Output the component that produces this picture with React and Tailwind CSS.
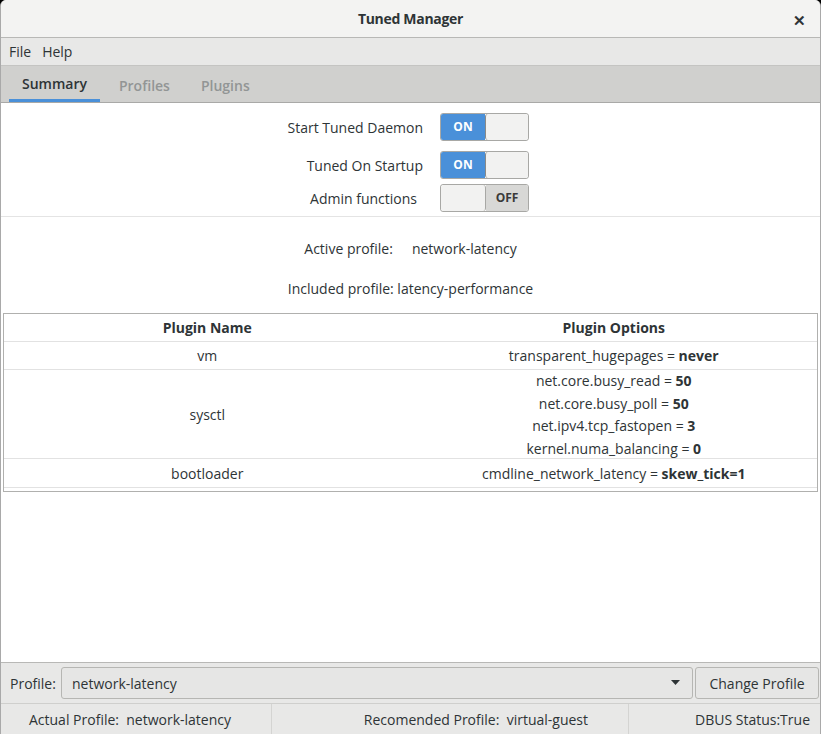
import React from 'react';

const font = { fontFamily: '"Open Sans", "Noto Sans", sans-serif' };

function Toggle({ on }) {
  return (
    <div className="flex h-[28px] w-[89px] overflow-hidden rounded-[3px] border border-[#a8a8a5] text-[12px] font-bold">
      {on ? (
        <>
          <div className="flex w-[44px] items-center justify-center bg-[#4a90d9] text-white">ON</div>
          <div className="flex-1 rounded-[3px] border-l border-[#8a8a87] bg-[#f2f2f1]" />
        </>
      ) : (
        <>
          <div className="w-[45px] rounded-[3px] border-r border-[#a8a8a5] bg-[#f2f2f1]" />
          <div className="flex flex-1 items-center justify-center bg-[#d8d8d6] text-[#3a3a3a]">OFF</div>
        </>
      )}
    </div>
  );
}

function SwitchRow({ label, on, className, pad }) {
  return (
    <div className={'flex items-center ' + (className || '')}>
      <div className={'w-[422px] text-right ' + (pad || '')}>{label}</div>
      <div className="ml-[17px]">
        <Toggle on={on} />
      </div>
    </div>
  );
}

function Opt({ k, v }) {
  return (
    <div>
      {k} = <b>{v}</b>
    </div>
  );
}

export default function App() {
  return (
    <div className="h-[734px] w-[821px] bg-black text-[14px] text-[#2e3436]" style={font}>
      <div className="flex h-full flex-col overflow-hidden rounded-t-[6px] border-x border-[#a9a9a9] bg-[#e8e8e7]">
        {/* title bar */}
        <div className="relative flex h-[38px] shrink-0 items-center justify-center border-b border-[#b8b8b6] bg-[#f3f3f2] font-bold tracking-[-0.3px] text-[#2e3436]">
          Tuned Manager
          <span className="absolute right-[14px] top-[9px] text-[15px]">✕</span>
        </div>
        {/* menu */}
        <div className="flex h-[28px] shrink-0 items-center gap-[11px] border-b border-[#c4c4c2] px-[8px]">
          <span>File</span>
          <span>Help</span>
        </div>
        {/* tabs */}
        <div className="flex h-[37px] shrink-0 items-stretch border-b border-[#a9a9a7] bg-[#d0d0ce] pl-[8px] font-semibold">
          <div className="flex items-center border-b-[3px] border-[#4a90d9] px-[13px] pt-[2px] text-[#2e3436]">Summary</div>
          <div className="flex items-center px-[19px] pt-[2px] text-[#929595]">Profiles</div>
          <div className="flex items-center px-[12px] pt-[2px] text-[#929595]">Plugins</div>
        </div>
        {/* content */}
        <div className="flex flex-1 flex-col border-b border-[#b8b8b6] bg-white">
          <div className="pt-[10px]">
            <SwitchRow label="Start Tuned Daemon" on />
            <SwitchRow label="Tuned On Startup" on className="mt-[10px]" />
            <SwitchRow label="Admin functions" className="mt-[5px]" pad="pr-[6px]" />
          </div>
          <div className="mt-[4px] border-b border-[#e4e4e4]" />
          <div className="mt-[21px] flex justify-center">
            <span className="mr-[19px]">Active profile:</span>
            <span>network-latency</span>
          </div>
          <div className="mt-[19px] text-center">Included profile: latency-performance</div>
          <div className="mx-[2px] mt-[14px] h-[179px] border border-[#b0b0ae]">
            <div className="grid grid-cols-2 border-b border-[#e2e2e2] py-[3px] text-center font-bold">
              <div>Plugin Name</div>
              <div>Plugin Options</div>
            </div>
            <div className="grid h-[28px] grid-cols-2 items-center border-b border-[#e2e2e2] text-center">
              <div>vm</div>
              <Opt k="transparent_hugepages" v="never" />
            </div>
            <div className="grid h-[89px] grid-cols-2 items-center border-b border-[#e2e2e2] text-center leading-[22.5px]">
              <div>sysctl</div>
              <div>
                <Opt k="net.core.busy_read" v="50" />
                <Opt k="net.core.busy_poll" v="50" />
                <Opt k="net.ipv4.tcp_fastopen" v="3" />
                <Opt k="kernel.numa_balancing" v="0" />
              </div>
            </div>
            <div className="grid h-[29px] grid-cols-2 items-center border-b border-[#e2e2e2] text-center">
              <div>bootloader</div>
              <Opt k="cmdline_network_latency" v="skew_tick=1" />
            </div>
          </div>
        </div>
        {/* profile row */}
        <div className="flex h-[41px] shrink-0 items-center border-b border-[#cfcfcd] pl-[9px] pr-[1px]">
          <span className="w-[51px]">Profile:</span>
          <div className="flex h-[32px] flex-1 items-center justify-between rounded-[3px] border border-[#b6b6b3] bg-[#e6e6e5] pl-[10px] pr-[12px]">
            <span>network-latency</span>
            <svg width="9" height="6" viewBox="0 0 9 6"><path d="M0 0h9L4.5 5z" fill="#2e3436" /></svg>
          </div>
          <div className="ml-[2px] flex h-[32px] w-[124px] items-center justify-center rounded-[3px] border border-[#b6b6b3] bg-[#e6e6e5]">
            Change Profile
          </div>
        </div>
        {/* status bar */}
        <div className="flex h-[30px] shrink-0 items-center">
          <div className="flex h-full w-[271px] items-center justify-end border-r border-[#d4d4d2] pr-[40px]">Actual Profile:&nbsp; network-latency</div>
          <div className="flex h-full w-[357px] items-center justify-end border-r border-[#d4d4d2] pr-[40px]">Recomended Profile:&nbsp; virtual-guest</div>
          <div className="flex h-full flex-1 items-center justify-end pr-[10px]">DBUS Status:True</div>
        </div>
      </div>
    </div>
  );
}
